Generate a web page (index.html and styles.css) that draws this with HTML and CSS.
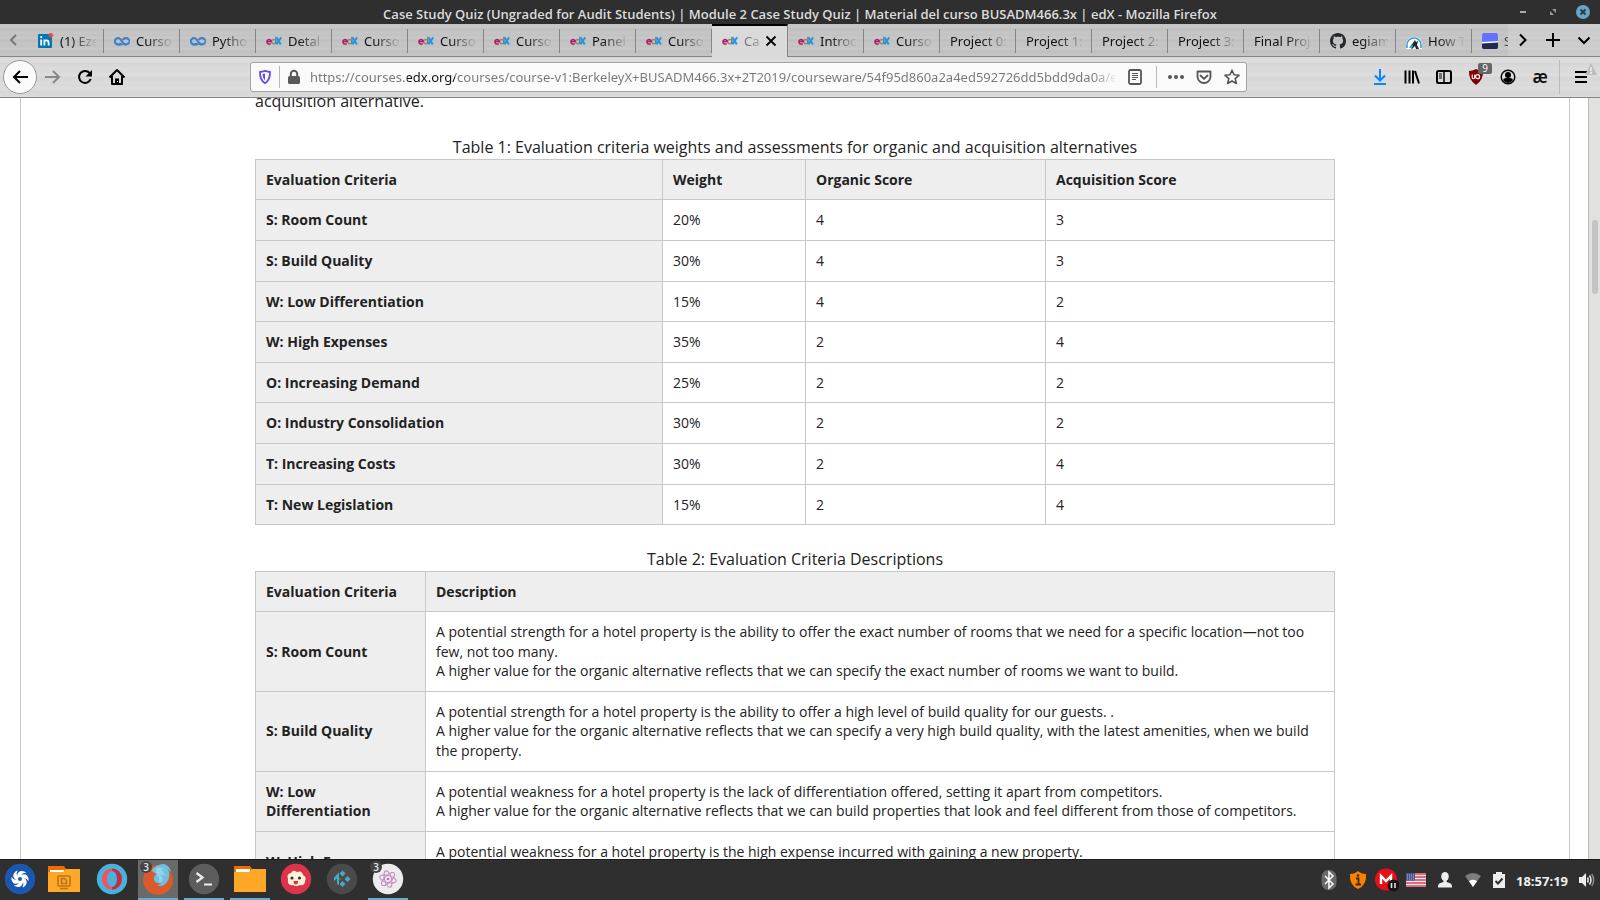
FILE: index.html
```html
<!DOCTYPE html>
<html lang="en">
<head>
<meta charset="utf-8">
<title>Case Study Quiz</title>
<link rel="stylesheet" href="styles.css">
</head>
<body>
<svg class="sprite" aria-hidden="true">
  <symbol id="edx" viewBox="0 0 16 16">
    <circle cx="7.800" cy="8.600" r="2.100" fill="none" stroke="#8b8b8b" stroke-width="1.400"/>
    <path d="M9.900 3.800v7.500" stroke="#777" stroke-width="1.300"/>
    <path d="M.9 8.500h4.400a2.200 2.300 0 1 0-.6 1.900" fill="none" stroke="#b5175f" stroke-width="1.500"/>
    <path d="M10.500 4.200l4.300 7.200M15.200 4.200l-4.700 7.200" stroke="#1f95e6" stroke-width="2"/>
  </symbol>
  <symbol id="coursera" viewBox="0 0 16 16">
    <path d="M9.600 10C8.300 12 6.500 11.900 4.300 11.600A3.300 3.300 0 0 1 4.300 5C7.500 5 8 11.600 11.700 11.600A3.300 3.300 0 0 0 14.300 10M14.300 6.600A3.300 3.300 0 0 0 11.700 5C10 5 9.200 5.800 8.400 7" fill="none" stroke="#3f83c8" stroke-width="2"/>
    <path d="M6.700 6.500a3.200 3.200 0 1 0 0 3.600M9.600 10a3.200 3.200 0 1 0 0-3.600" fill="none" stroke="#3f83c8" stroke-width="1.800"/>
  </symbol>
</svg>
<div class="desktop">
  <header class="titlebar">
    <h1 class="window-title">Case Study Quiz (Ungraded for Audit Students) | Module 2 Case Study Quiz | Material del curso BUSADM466.3x | edX - Mozilla Firefox</h1>
    <div class="window-buttons">
      <button class="window-button" aria-label="Minimize"><svg width="14" height="14" viewBox="0 0 14 14"><path d="M4 7h6" stroke="#aaa" stroke-width="2"/></svg></button>
      <button class="window-button" aria-label="Restore"><svg width="14" height="14" viewBox="0 0 14 14"><path d="M6 4h4v4zM4 6v4h4z" fill="#999"/></svg></button>
      <button class="window-button" aria-label="Close"><svg width="14" height="14" viewBox="0 0 14 14"><circle cx="7" cy="7" r="7" fill="#67a6c9"/><path d="M4.500 4.500l5 5m0-5l-5 5" stroke="#2b3b45" stroke-width="1.800"/></svg></button>
    </div>
  </header>

  <nav class="tabbar" aria-label="Tabs">
    <button class="tab-scroll tab-scroll-left" aria-label="Scroll left"><svg width="12" height="14" viewBox="0 0 12 14"><path d="M8 2L3 7l5 5" fill="none" stroke="#777" stroke-width="2"/></svg></button>
    <div class="tabs">
      <button class="tab"><svg width="16" height="16" viewBox="0 0 16 16"><rect x="0" y="1" width="14" height="14" rx="1" fill="#0077b5"/><path d="M3.200 6.500v6M6.400 12.500v-6M6.400 9.500q.2-2.200 2.200-2.200t2 2.400v2.800" fill="none" stroke="#fff" stroke-width="1.800"/><circle cx="3.200" cy="4.200" r="1.100" fill="#fff"/><circle cx="12.800" cy="2.300" r="2.300" fill="#ed4a3b"/></svg><span class="tab-label">(1) Eze</span></button>
      <button class="tab"><svg width="16" height="16"><use href="#coursera"/></svg><span class="tab-label">Curso</span></button>
      <button class="tab"><svg width="16" height="16"><use href="#coursera"/></svg><span class="tab-label">Pytho</span></button>
      <button class="tab"><svg width="16" height="16"><use href="#edx"/></svg><span class="tab-label">Detal</span></button>
      <button class="tab"><svg width="16" height="16"><use href="#edx"/></svg><span class="tab-label">Curso</span></button>
      <button class="tab"><svg width="16" height="16"><use href="#edx"/></svg><span class="tab-label">Curso</span></button>
      <button class="tab"><svg width="16" height="16"><use href="#edx"/></svg><span class="tab-label">Curso</span></button>
      <button class="tab"><svg width="16" height="16"><use href="#edx"/></svg><span class="tab-label">Panel</span></button>
      <button class="tab"><svg width="16" height="16"><use href="#edx"/></svg><span class="tab-label">Curso</span></button>
      <button class="tab tab-active"><svg width="16" height="16"><use href="#edx"/></svg><span class="tab-label">Ca</span><svg width="12" height="12" viewBox="0 0 12 12"><path d="M1.500 1.500l9 9m0-9l-9 9" stroke="#000" stroke-width="1.800"/></svg></button>
      <button class="tab"><svg width="16" height="16"><use href="#edx"/></svg><span class="tab-label">Introc</span></button>
      <button class="tab"><svg width="16" height="16"><use href="#edx"/></svg><span class="tab-label">Curso</span></button>
      <button class="tab"><span class="tab-label">Project 0:</span></button>
      <button class="tab"><span class="tab-label">Project 1:</span></button>
      <button class="tab"><span class="tab-label">Project 2:</span></button>
      <button class="tab"><span class="tab-label">Project 3:</span></button>
      <button class="tab"><span class="tab-label">Final Proj</span></button>
      <button class="tab"><svg width="16" height="16" viewBox="0 0 16 16"><path fill="#24292e" d="M8 0C3.580 0 0 3.580 0 8c0 3.540 2.290 6.530 5.470 7.590.4.070.55-.17.55-.38 0-.19-.01-.82-.01-1.490-2.010.37-2.530-.49-2.690-.94-.09-.23-.48-.94-.82-1.130-.28-.15-.68-.52-.01-.53.63-.01 1.080.58 1.230.82.72 1.210 1.870.87 2.330.66.070-.52.28-.87.51-1.070-1.780-.2-3.640-.89-3.640-3.950 0-.87.31-1.590.82-2.150-.08-.2-.36-1.020.08-2.120 0 0 .67-.21 2.200.82.64-.18 1.320-.27 2-.27s1.360.09 2 .27c1.530-1.040 2.200-.82 2.200-.82.44 1.100.16 1.920.08 2.120.51.56.82 1.270.82 2.150 0 3.070-1.870 3.750-3.650 3.950.29.25.54.73.54 1.480 0 1.070-.01 1.930-.01 2.200 0 .21.15.46.55.38A8 8 0 0 0 16 8c0-4.420-3.580-8-8-8z"/></svg><span class="tab-label">egiam</span></button>
      <button class="tab"><svg width="16" height="16" viewBox="0 0 16 16"><path d="M0 16V12a8 8 0 0 1 16 0v4z" fill="#fff"/><path d="M1 15V12a7 7 0 0 1 14 0v3" fill="none" stroke="#3aa0d4" stroke-width="1.600"/><path d="M4 14l5-7 1 2 2-1-1 4 2 4h-3l-1-3-3 3z" fill="#1b2a36"/><path d="M3 15l3-4 1 2-1 2z" fill="#29a9e0"/></svg><span class="tab-label">How T</span></button>
      <button class="tab"><svg width="16" height="16" viewBox="0 0 16 16"><rect width="16" height="16" rx="2" fill="#6471ff"/><path d="M0 9.500L16 8v6a2 2 0 0 1-2 2H2a2 2 0 0 1-2-2z" fill="#1f2a4d"/><path d="M0 9L16 8v1.500L0 10.500z" fill="#fff"/></svg><span class="tab-label">S</span></button>
    </div>
    <div class="tab-tools">
      <button class="tab-scroll" aria-label="Scroll right"><svg width="16" height="16" viewBox="0 0 16 16"><path d="M5 2.500L10.500 8 5 13.500" fill="none" stroke="#000" stroke-width="2"/></svg></button>
      <button class="tab-scroll" aria-label="New tab"><svg width="16" height="16" viewBox="0 0 16 16"><path d="M8 1v14M1 8h14" stroke="#000" stroke-width="2"/></svg></button>
      <button class="tab-scroll tab-list" aria-label="List all tabs"><svg width="16" height="16" viewBox="0 0 16 16"><path d="M2.500 5.500L8 11l5.500-5.500" fill="none" stroke="#000" stroke-width="2"/></svg></button>
    </div>
  </nav>

  <div class="toolbar">
    <div class="nav-buttons">
      <button class="back" aria-label="Back"><svg width="18" height="18" viewBox="0 0 18 18"><path d="M9 3L3 9l6 6M3 9h14" fill="none" stroke="#000" stroke-width="2"/></svg></button>
      <button class="tool" aria-label="Forward"><svg width="18" height="18" viewBox="0 0 18 18"><path d="M9 3l6 6-6 6M15 9H1" fill="none" stroke="#888" stroke-width="2"/></svg></button>
      <button class="tool" aria-label="Reload"><svg width="18" height="18" viewBox="0 0 18 18"><path d="M14 5.500A6 6 0 1 0 14.700 11" fill="none" stroke="#000" stroke-width="2"/><path d="M16 2v6.500H9.500z" fill="#000"/></svg></button>
      <button class="tool" aria-label="Home"><svg width="18" height="18" viewBox="0 0 18 18"><path d="M1.500 9.500L9 2l7.500 7.500M4 8v8h10V8" fill="none" stroke="#000" stroke-width="2" stroke-linejoin="round"/><path d="M7 16v-5.500h4V16z" fill="#000"/><path d="M9 13h1v1H9z" fill="#fff"/></svg></button>
    </div>
    <div class="spacer"></div>
    <div class="urlbar">
      <button class="url-icon shield" aria-label="Tracking protection"><svg width="16" height="16" viewBox="0 0 16 16"><path d="M8 1.800q3 1 5 1.200.3 8-5 11.200Q2.700 11 3 3 5 2.800 8 1.800z" fill="none" stroke="#6a4be0" stroke-width="1.800"/><path d="M8 4.500q-1.500.4-2.500.6.1 4.500 2.500 6.500z" fill="#4d55dd"/></svg></button>
      <span class="url-divider"></span>
      <button class="url-icon lock" aria-label="Site information"><svg width="16" height="16" viewBox="0 0 16 16"><rect x="2" y="7" width="12" height="8" rx="1.500" fill="#5a5a5a"/><path d="M4.800 8V5a3.200 3.200 0 0 1 6.400 0v3" fill="none" stroke="#5a5a5a" stroke-width="2"/></svg></button>
      <input class="url-input" type="text" aria-label="Address" value="https://courses.edx.org/courses/course-v1:BerkeleyX+BUSADM466.3x+2T2019/courseware/54f95d860a2a4ed592726dd5bdd9da0a/e4">
      <button class="url-icon reader" aria-label="Reader view"><svg width="16" height="16" viewBox="0 0 16 16"><rect x="2" y="1" width="12" height="14" rx="1.500" fill="none" stroke="#555" stroke-width="1.800"/><path d="M5 4.500h6M5 6.500h6M5 8.500h6M5 10.500h4" stroke="#555"/></svg></button>
      <span class="url-divider"></span>
      <button class="url-icon" aria-label="Page actions"><svg width="16" height="16" viewBox="0 0 16 16"><g fill="#555"><circle cx="2" cy="8" r="2"/><circle cx="8" cy="8" r="2"/><circle cx="14" cy="8" r="2"/></g></svg></button>
      <button class="url-icon" aria-label="Save to Pocket"><svg width="16" height="16" viewBox="0 0 16 16"><path d="M1.500 2.500h13v5a6.500 6.500 0 0 1-13 0zM4.500 6.500L8 9.800l3.500-3.300" fill="none" stroke="#555" stroke-width="1.800" stroke-linejoin="round" stroke-linecap="round"/></svg></button>
      <button class="url-icon" aria-label="Bookmark"><svg width="16" height="16" viewBox="0 0 16 16"><path d="M8 1.200l2 4.600 5 .5-3.800 3.300 1.200 4.900L8 12l-4.400 2.500 1.200-4.900L1 6.300l5-.5z" fill="none" stroke="#555" stroke-width="1.600" stroke-linejoin="round"/></svg></button>
    </div>
    <div class="spacer"></div>
    <div class="tools">
      <button class="tool" aria-label="Downloads"><svg width="16" height="16" viewBox="0 0 16 16"><path d="M8 0v11M3 6.500l5 5 5-5M2 15h12" fill="none" stroke="#0a84ff" stroke-width="2"/></svg></button>
      <button class="tool" aria-label="Library"><svg width="16" height="16" viewBox="0 0 16 16"><path d="M1.500 1.500v13M5.500 1.500v13M9 1.500v13M11 2l4 12.500" stroke="#000" stroke-width="2"/></svg></button>
      <button class="tool" aria-label="Sidebars"><svg width="16" height="16" viewBox="0 0 16 16"><rect x="1" y="2" width="14" height="12" rx="1.500" fill="none" stroke="#000" stroke-width="2"/><path d="M8 2v12" stroke="#000" stroke-width="1.500"/><path d="M3 5h3M3 7h3M3 9h3" stroke="#000"/></svg></button>
      <button class="tool" aria-label="uBlock Origin"><svg width="16" height="16" viewBox="0 0 16 16"><path d="M8 0q3.500 2 7 2 .5 9-7 14Q.5 11 1 2q3.500 0 7-2z" fill="#800000"/><path d="M4.200 5.500v3q0 1.200 1.200 1.200T6.700 8.500v-3" fill="none" stroke="#fff" stroke-width="1.100"/><circle cx="9.600" cy="7.700" r="2" fill="none" stroke="#fff" stroke-width="1.200"/></svg><span class="badge">9</span></button>
      <button class="tool" aria-label="Account"><svg width="16" height="16" viewBox="0 0 16 16"><circle cx="8" cy="8" r="6.800" fill="none" stroke="#000" stroke-width="1.400"/><circle cx="8" cy="6" r="3" fill="#000"/><path d="M3 11q1-2 3-2h4q2 0 3 2-2 3-5 3t-5-3z" fill="#000"/></svg></button>
      <button class="tool ae" aria-label="Extension">æ</button>
      <span class="tool-divider"></span>
      <button class="tool" aria-label="Menu"><svg width="16" height="16" viewBox="0 0 16 16"><path d="M2 3h12M2 8h12M2 13h12" stroke="#000" stroke-width="2"/></svg><svg class="warning" width="12" height="12" viewBox="0 0 12 12"><path d="M6 0l6 12H0z" fill="#bdbdbd"/><path d="M6 4v4M6 9v2" stroke="#eee" stroke-width="1.500"/></svg></button>
    </div>
  </div>

  <div class="viewport">
    <main class="page">
      <p class="lead">acquisition alternative.</p>
      <table class="data">
        <caption>Table 1: Evaluation criteria weights and assessments for organic and acquisition alternatives</caption>
        <colgroup><col class="c-criteria"><col class="c-weight"><col class="c-organic"><col></colgroup>
        <thead><tr><th scope="col">Evaluation Criteria</th><th scope="col">Weight</th><th scope="col">Organic Score</th><th scope="col">Acquisition Score</th></tr></thead>
        <tbody>
          <tr><th scope="row">S: Room Count</th><td>20%</td><td>4</td><td>3</td></tr>
          <tr><th scope="row">S: Build Quality</th><td>30%</td><td>4</td><td>3</td></tr>
          <tr><th scope="row">W: Low Differentiation</th><td>15%</td><td>4</td><td>2</td></tr>
          <tr><th scope="row">W: High Expenses</th><td>35%</td><td>2</td><td>4</td></tr>
          <tr><th scope="row">O: Increasing Demand</th><td>25%</td><td>2</td><td>2</td></tr>
          <tr><th scope="row">O: Industry Consolidation</th><td>30%</td><td>2</td><td>2</td></tr>
          <tr><th scope="row">T: Increasing Costs</th><td>30%</td><td>2</td><td>4</td></tr>
          <tr><th scope="row">T: New Legislation</th><td>15%</td><td>2</td><td>4</td></tr>
        </tbody>
      </table>
      <table class="data">
        <caption>Table 2: Evaluation Criteria Descriptions</caption>
        <colgroup><col class="c-name"><col></colgroup>
        <thead><tr><th scope="col">Evaluation Criteria</th><th scope="col">Description</th></tr></thead>
        <tbody>
          <tr><th scope="row">S: Room Count</th><td>A potential strength for a hotel property is the ability to offer the exact number of rooms that we need for a specific location—not too few, not too many.<br>A higher value for the organic alternative reflects that we can specify the exact number of rooms we want to build.</td></tr>
          <tr><th scope="row">S: Build Quality</th><td>A potential strength for a hotel property is the ability to offer a high level of build quality for our guests. .<br>A higher value for the organic alternative reflects that we can specify a very high build quality, with the latest amenities, when we build the property.</td></tr>
          <tr><th scope="row">W: Low Differentiation</th><td>A potential weakness for a hotel property is the lack of differentiation offered, setting it apart from competitors.<br>A higher value for the organic alternative reflects that we can build properties that look and feel different from those of competitors.</td></tr>
          <tr><th scope="row">W: High Expenses</th><td>A potential weakness for a hotel property is the high expense incurred with gaining a new property.<br>&nbsp;</td></tr>
        </tbody>
      </table>
    </main>
    <div class="scrollbar"><div class="thumb"></div></div>
  </div>

  <footer class="taskbar">
    <div class="launchers">
      <button class="app" aria-label="Menu"><svg width="32" height="32" viewBox="0 0 32 32"><circle cx="16" cy="16" r="15.200" fill="#1b57ae"/><g transform="translate(3.500 3.500) scale(.78)"><g fill="#fff"><path id="blade" d="M13 14q-2-5 3-8 5-1 8 2-5 0-6 3l-1 4z"/><use href="#blade" transform="rotate(60 16 16)"/><use href="#blade" transform="rotate(120 16 16)"/><use href="#blade" transform="rotate(180 16 16)"/><use href="#blade" transform="rotate(240 16 16)"/><use href="#blade" transform="rotate(300 16 16)"/></g><circle cx="16" cy="16" r="2.500" fill="#1b57ae"/></g></svg></button>
      <button class="app" aria-label="Show desktop"><svg width="32" height="32" viewBox="0 0 32 32"><path d="M0 3h16l2 3v7H0z" fill="#ef6c00"/><path d="M2 7h14v3H2z" fill="#fff"/><path d="M0 9h15l3-3h14v23H0z" fill="#ffa726"/><rect x="10" y="13" width="12" height="10" rx="1" fill="none" stroke="#b5761b" stroke-width="1.600"/><path d="M13.500 15.500h3l2 2v3h-5zM12 25.500h8" fill="none" stroke="#b5761b" stroke-width="1.500"/></svg></button>
    </div>
    <div class="windows">
      <button class="app" aria-label="Opera"><svg width="32" height="32" viewBox="0 0 32 32"><circle cx="16" cy="16" r="15.200" fill="#45b3dc"/><ellipse cx="16" cy="16" rx="10" ry="10.500" fill="#ff4b5c"/><path d="M16 5.500a10 10.500 0 0 1 0 21z" fill="#c12d43"/><ellipse cx="16" cy="16" rx="5" ry="8" fill="#45b3dc"/></svg></button>
      <button class="app app-open app-current" aria-label="Firefox"><svg width="32" height="32" viewBox="0 0 32 32"><circle cx="16" cy="17" r="15" fill="#d95b2b"/><path d="M9 8Q14 1 22 1q6 2 7 8-2-1-3-3 3 8-1 13-4 6-10 3 3 0 4-2-5 1-7-3-1-4 3-6-3-1-5-3z" fill="#6cc0e0"/><path d="M14 5q5-2 9 2l-4-1 5 7q-3-2-6-1 4 2 2 6-2 2-4 1 3-3 0-6t-2-8z" fill="#93d2ea"/></svg><span class="count">3</span></button>
      <button class="app app-open" aria-label="Terminal"><svg width="32" height="32" viewBox="0 0 32 32"><circle cx="16" cy="16" r="15.200" fill="#5d5d5d"/><path d="M8.500 10l6 4.500-6 4.500" fill="none" stroke="#eee" stroke-width="2.200"/><path d="M16 21.500h8" stroke="#eee" stroke-width="2"/></svg></button>
      <button class="app app-open" aria-label="Files"><svg width="32" height="32" viewBox="0 0 32 32"><path d="M0 3h16l2 3v7H0z" fill="#ef6c00"/><path d="M2 6h14v3H2z" fill="#fff"/><path d="M0 9h15l3-3h14v23H0z" fill="#ffa726"/></svg></button>
      <button class="app" aria-label="Popcorn"><svg width="32" height="32" viewBox="0 0 32 32"><circle cx="16" cy="16" r="15.200" fill="#dc3549"/><path d="M8 16q-2-5 3-6 2-4 6-1 5-2 6 3 4 2 2 6 0 5-5 4-4 2-7 0-6 1-5-6z" fill="#fff0dc"/><circle cx="12" cy="15" r="1.600" fill="#333"/><circle cx="19.500" cy="15" r="1.600" fill="#333"/><path d="M13.500 18h4.500q0 3.500-2.200 3.500T13.500 18z" fill="#d33"/></svg></button>
      <button class="app" aria-label="Kodi"><svg width="32" height="32" viewBox="0 0 32 32"><circle cx="16" cy="16" r="15.200" fill="#4a4a4a"/><g fill="#45abc2"><path d="M16.500 7.500l3 3-3 3-3-3zM16.500 18l3 3-3 3-3-3zM21.500 13l3 3-3 3-3-3zM8 14.500l5-5v6l3 .5-3 .5v6l-2-2v-5l-3 2.500z"/></g></svg></button>
      <button class="app app-open" aria-label="Atom"><svg width="32" height="32" viewBox="0 0 32 32"><circle cx="16" cy="16" r="15.200" fill="#ececec"/><g fill="none" stroke="#c283bd" stroke-width="1"><ellipse cx="16" cy="16" rx="8.500" ry="3.500" transform="rotate(15 16 16)"/><ellipse cx="16" cy="16" rx="8.500" ry="3.500" transform="rotate(75 16 16)"/><ellipse cx="16" cy="16" rx="8.500" ry="3.500" transform="rotate(135 16 16)"/></g><circle cx="16" cy="16" r="1.300" fill="#bb6fb5"/></svg><span class="count">3</span></button>
    </div>
    <div class="tray">
      <button class="applet" aria-label="Bluetooth"><svg width="16" height="22" viewBox="0 0 16 22"><rect x=".5" y="1" width="15" height="20" rx="7" fill="#686868"/><path d="M4 7l8 8-4 4V3l4 4-8 8" fill="none" stroke="#fff" stroke-width="1.500"/></svg></button>
      <button class="applet" aria-label="Updates"><svg width="18" height="20" viewBox="0 0 18 20"><path d="M9 1q3 3 8 3 1 11-8 15Q0 15 1 4q5 0 8-3z" fill="#ff8000"/><path d="M7 8.500h2.500V14M6.500 14.500h5.500" fill="none" stroke="#3a2a1a" stroke-width="1.800"/><circle cx="9" cy="5.500" r="1.300" fill="#3a2a1a"/></svg></button>
      <button class="applet" aria-label="Mega"><svg width="24" height="24" viewBox="0 0 24 24"><circle cx="11" cy="11.500" r="11" fill="#e90f18"/><path d="M6 16V8l5 5 5-5v5" fill="none" stroke="#fff" stroke-width="2.400"/><circle cx="18.500" cy="17.500" r="6" fill="#151515"/><path d="M16.500 15v5M20 15v5" stroke="#ddd" stroke-width="1.600"/></svg></button>
      <button class="applet" aria-label="Keyboard layout"><svg width="20" height="14" viewBox="0 0 20 14"><path fill="#f2e6e8" d="M0 0h20v14H0z"/><path d="M0 1h20M0 4h20M0 7h20M0 10h20M0 13h20" stroke="#d0485a" stroke-width="1.600"/><path fill="#46578f" d="M0 0h9v7.500H0z"/><path d="M1 2h7M1 4h7M1 6h7" stroke="#aab4d4" stroke-dasharray="1 1"/></svg></button>
      <button class="applet" aria-label="User"><svg width="14" height="16" viewBox="0 0 14 16"><ellipse cx="7" cy="4.500" rx="3.800" ry="4.500" fill="#eee"/><path d="M5.500 8h3v2q5.500 1 5.500 4v1.500H0V14q0-3 5.500-4z" fill="#eee"/></svg></button>
      <button class="applet applet-narrow" aria-label="Network"><svg width="16" height="14" viewBox="0 0 16 14"><path d="M0 3q8-6 16 0L8 14z" fill="#7d7d7d"/><path d="M4 8.200q4-2.800 8 0L8 14z" fill="#fff"/></svg></button>
      <button class="applet applet-narrow" aria-label="Battery"><svg width="14" height="16" viewBox="0 0 14 16"><path d="M1 2h3V0h6v2h3v14H1z" fill="#eee"/><path d="M3.500 9l2.500 2.500 4.500-5" fill="none" stroke="#2f2f2f" stroke-width="2"/></svg></button>
      <time class="clock">18:57:19</time>
      <button class="applet-volume" aria-label="Volume"><svg width="16" height="16" viewBox="0 0 16 16"><path d="M0 5h3l4-4v14l-4-4H0z" fill="#eee"/><path d="M8.500 5.500q1.500 2.500 0 5M10.500 3.500q3 4.500 0 9" fill="none" stroke="#eee" stroke-width="1.500"/><path d="M12.700 2q4 6 0 12" fill="none" stroke="#888" stroke-width="1.500"/></svg></button>
    </div>
  </footer>
</div>
</body>
</html>
```

FILE: styles.css
```css
* { box-sizing: border-box; }

body {
  margin: 0;
  font-family: "Open Sans", "Noto Sans", sans-serif;
  color: #222;
  background: #fff;
}

button {
  border: 0;
  padding: 0;
  background: none;
  font: inherit;
  color: inherit;
}

svg { display: block; flex: none; }

.sprite { display: none; }

.desktop {
  display: flex;
  flex-direction: column;
  height: 100vh;
  overflow: hidden;
}

/* Title bar */
.titlebar {
  display: grid;
  grid-template-columns: 1fr auto 1fr;
  align-items: center;
  flex: none;
  height: 24px;
  background: #2f2f2f;
  color: #dcdcdc;
}

.window-title {
  grid-column: 2;
  margin: 0;
  padding-top: 3px;
  font: 600 13px/20px "Open Sans", "Noto Sans", sans-serif;
  white-space: nowrap;
}

.window-buttons {
  display: flex;
  justify-content: flex-end;
  gap: 16px;
  padding-right: 10px;
}

/* Tabs */
.tabbar {
  display: flex;
  flex: none;
  height: 33px;
  border-bottom: 1px solid #858585;
  background: repeating-linear-gradient(#c2c2c2 0, #c9c9c9 3px, #bfbfbf 5px, #c6c6c6 9px, #c2c2c2 11px);
  font-family: "Noto Sans", "Open Sans", sans-serif;
  font-size: 13px;
  line-height: 20px;
  color: #111;
}

.tab-scroll {
  display: flex;
  align-items: center;
  justify-content: center;
  width: 30px;
}

.tab-scroll-left { width: 28px; }

.tab-list { width: 32px; }

.tabs {
  display: flex;
  flex: 1;
  min-width: 0;
  height: 33px;
  overflow: hidden;
  -webkit-mask-image: linear-gradient(90deg, #000 calc(100% - 8px), rgba(0, 0, 0, 0.6));
  mask-image: linear-gradient(90deg, #000 calc(100% - 8px), rgba(0, 0, 0, 0.6));
}

.tab {
  display: flex;
  align-items: center;
  gap: 6px;
  flex: none;
  width: 76px;
  height: 32px;
  padding: 2px 8px 0 10px;
  background: linear-gradient(#858585, #858585) right 5px / 1px 24px no-repeat;
}

.tab-label {
  flex: 1;
  overflow: hidden;
  text-align: left;
  white-space: nowrap;
  -webkit-mask-image: linear-gradient(90deg, #000 calc(100% - 26px), rgba(0, 0, 0, 0.1) calc(100% - 2px));
  mask-image: linear-gradient(90deg, #000 calc(100% - 26px), rgba(0, 0, 0, 0.1) calc(100% - 2px));
}

.tab-active {
  height: 33px;
  padding: 0 10px 1px;
  border: solid #858585;
  border-width: 2px 1px 0 0;
  border-top-color: #000;
  background: #dadada;
}

.tab-active .tab-label {
  color: #777;
  -webkit-mask-image: linear-gradient(90deg, #000 40%, rgba(0, 0, 0, 0.5));
  mask-image: linear-gradient(90deg, #000 40%, rgba(0, 0, 0, 0.5));
}

.tab-tools {
  display: flex;
  background: rgba(255, 255, 255, 0.15);
}

/* Navigation toolbar */
.toolbar {
  display: flex;
  align-items: center;
  flex: none;
  height: 41px;
  padding: 0 3px;
  border-bottom: 1px solid #858585;
  background: repeating-linear-gradient(#d9d9d9 0, #dedede 4px, #d6d6d6 7px, #dcdcdc 12px, #d9d9d9 14px);
}

.nav-buttons, .tools { display: flex; align-items: center; }

.back {
  display: flex;
  align-items: center;
  justify-content: center;
  width: 34px;
  height: 34px;
  border: 1px solid #999;
  border-radius: 50%;
  background: #fafafa;
}

.tool {
  position: relative;
  display: flex;
  align-items: center;
  justify-content: center;
  width: 32px;
  height: 32px;
}

.ae { font: 600 17px/24px "Noto Sans", sans-serif; color: #111; }

.badge {
  position: absolute;
  top: 2px;
  right: 0;
  width: 14px;
  border-radius: 2px;
  background: #666;
  color: #fff;
  font-size: 10px;
  line-height: 11px;
}

.warning { position: absolute; top: 2px; right: 0; }

.tool-divider {
  width: 1px;
  height: 34px;
  margin: 0 5px 0 3px;
  background: #bbb;
}

.spacer { flex: 117; }

.urlbar {
  display: flex;
  align-items: center;
  flex: 996;
  min-width: 0;
  height: 30px;
  border: 1px solid #a3a3a3;
  border-radius: 3px;
  background: #fafafa;
}

.url-icon {
  display: flex;
  align-items: center;
  justify-content: center;
  width: 28px;
  height: 28px;
}

.url-divider { width: 1px; height: 22px; background: #b8b8b8; }

.reader { margin-right: 7px; }

.url-divider + .url-icon { margin-left: 5px; }

.url-divider + .lock { margin-left: 0; }

.url-input {
  flex: 1;
  min-width: 0;
  height: 28px;
  border: 0;
  padding: 0 0 0 2px;
  outline: 0;
  background: linear-gradient(90deg, #777 99px, #111 99px, #111 147px, #777 147px, #777 calc(100% - 28px), #fafafa calc(100% - 4px));
  -webkit-background-clip: text;
  background-clip: text;
  color: transparent;
  font: 13px/20px "Noto Sans", "Open Sans", sans-serif;
}

/* Page */
.viewport {
  display: flex;
  flex: 1;
  min-height: 0;
}

.page {
  flex: 1;
  min-width: 0;
  margin: 0 18px 0 20px;
  padding: 0 234px;
  border: solid #c8c8c8;
  border-width: 0 1px;
  overflow: hidden;
}

.lead {
  margin: -8px 0 24px;
  font-size: 16px;
  line-height: 1.4;
}

.data {
  width: 100%;
  margin-bottom: 23px;
  border-collapse: collapse;
  table-layout: fixed;
  font-size: 14px;
  line-height: 1.4;
}

.data caption { font-size: 16px; }

.data th, .data td {
  padding: 10px;
  border: 1px solid #c8c8c8;
  text-align: left;
  vertical-align: middle;
}

.data th { background: #eee; font-weight: 700; }

.c-criteria { width: 407px; }
.c-weight { width: 143px; }
.c-organic { width: 240px; }
.c-name { width: 170px; }

.scrollbar {
  width: 12px;
  padding: 122px 2px 0;
  border-left: 1px solid #bcbcbc;
  background: #e1e1e0;
}

.thumb { width: 6px; height: 74px; margin: 0 auto; border-radius: 3px; background: #c3c5c4; }

/* Taskbar */
.taskbar {
  display: flex;
  flex: none;
  height: 41px;
  border-top: 1px solid #1c1c1c;
  background: #2f2f2f;
}

.launchers { display: flex; gap: 4px; margin-right: 8px; }

.windows { display: flex; gap: 6px; }

.app {
  position: relative;
  display: flex;
  justify-content: center;
  width: 40px;
  padding-top: 3px;
  border-bottom: 2px solid transparent;
}

.app-open { border-bottom-color: #6aabd0; }

.app-current { background: #6a6a6a; }

.count {
  position: absolute;
  top: 1px;
  left: 2px;
  width: 12px;
  height: 12px;
  border-radius: 50%;
  background: #444;
  color: #e4e4e4;
  font-size: 10px;
  font-weight: 600;
  line-height: 12px;
}

.tray {
  display: flex;
  align-items: center;
  margin-left: auto;
  padding-right: 5px;
}

.applet {
  display: flex;
  align-items: center;
  justify-content: center;
  width: 29px;
}

.applet-narrow { width: 26px; }

.clock {
  margin: 2px 11px 0 4px;
  color: #f0f0f0;
  font-size: 13px;
  font-weight: 700;
  line-height: 20px;
}
```
